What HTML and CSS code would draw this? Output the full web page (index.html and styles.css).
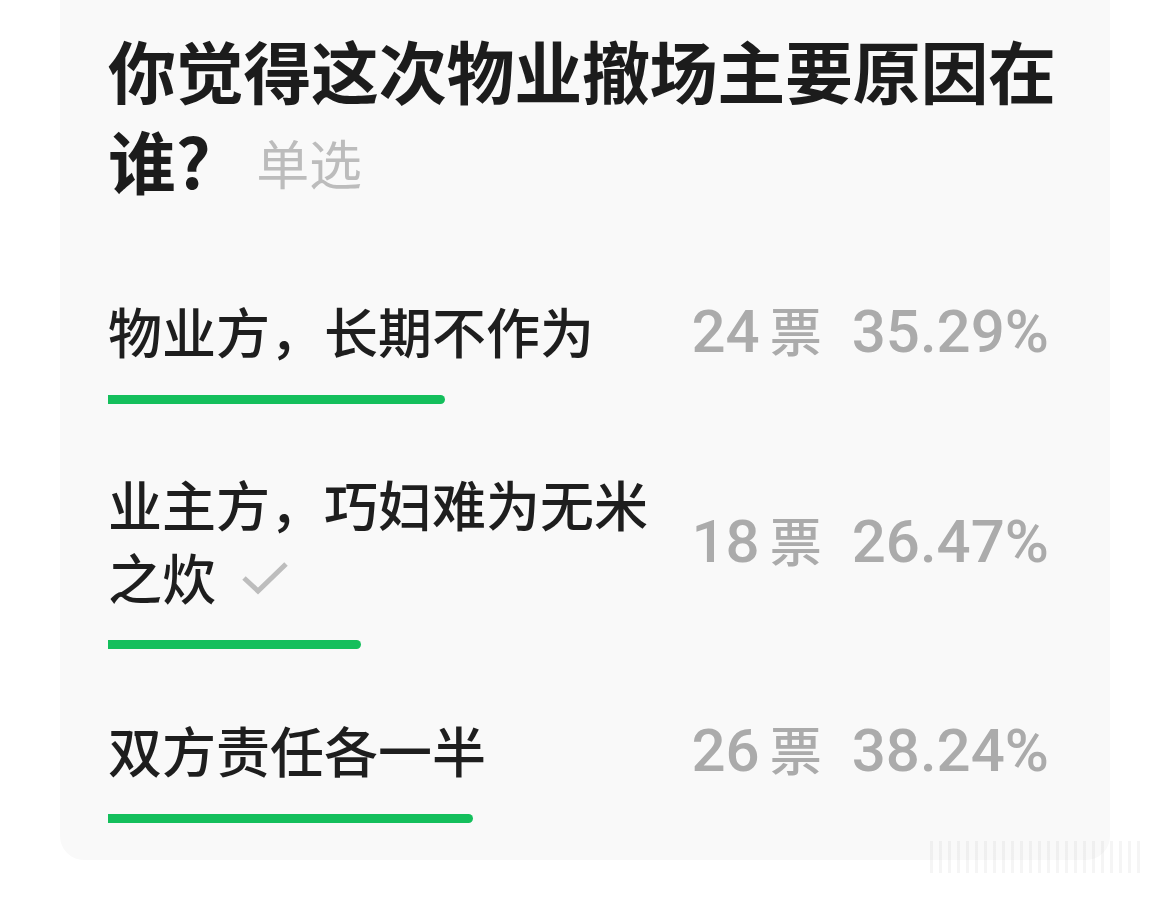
FILE: index.html
```html
<!DOCTYPE html>
<html lang="zh-CN">
<head>
  <meta charset="UTF-8">
  <meta name="viewport" content="width=device-width, initial-scale=1.0">
  <title>投票结果</title>
  <link rel="stylesheet" href="styles.css">
</head>
<body>
  <div class="vote-card">
    <h2 class="vote-title">你觉得这次物业撤场主要原因在谁?<span class="vote-type">单选</span></h2>

    <div class="option">
      <div class="option-row">
        <div class="option-text">物业方，长期不作为</div>
        <div class="option-stats"><span class="count">24<em>票</em></span><span>35.29%</span></div>
      </div>
      <div class="bar" style="width: 35.29%"></div>
    </div>

    <div class="option">
      <div class="option-row">
        <div class="option-text">业主方，巧妇难为无米之炊<svg class="check" viewBox="0 0 50 40" width="50" height="40"><path d="M4 20 L18 33 L46 6" fill="none" stroke="#bdbdbd" stroke-width="5"/></svg></div>
        <div class="option-stats"><span class="count">18<em>票</em></span><span>26.47%</span></div>
      </div>
      <div class="bar" style="width: 26.47%"></div>
    </div>

    <div class="option">
      <div class="option-row">
        <div class="option-text">双方责任各一半</div>
        <div class="option-stats"><span class="count">26<em>票</em></span><span>38.24%</span></div>
      </div>
      <div class="bar" style="width: 38.24%"></div>
    </div>
  </div>

  <div class="mark"></div>
</body>
</html>
```

FILE: styles.css
```css
* {
  margin: 0;
  padding: 0;
  box-sizing: border-box;
}

body {
  background: #ffffff;
  font-family: "Noto Sans CJK SC", "Noto Sans", sans-serif;
  width: 1170px;
  height: 898px;
  overflow: hidden;
  position: relative;
}

/* Card */
.vote-card {
  margin: -40px 0 0 60px;
  width: 1050px;
  background: #f9f9f9;
  border-radius: 0 0 24px 24px;
  padding: 65px 47px 37px 48px;
}

.vote-title {
  font-size: 68px;
  line-height: 90px;
  font-weight: 700;
  color: #1c1c1c;
  letter-spacing: -0.3px;
  margin-bottom: 86px;
}

.vote-type {
  font-size: 53px;
  font-weight: 400;
  color: #bcbcbc;
  margin-left: 46px;
  vertical-align: 4px;
}

/* Options */
.option {
  margin-bottom: 63px;
}

.option:last-child {
  margin-bottom: 0;
}

.option-row {
  display: flex;
  align-items: center;
  justify-content: space-between;
  margin-bottom: 27px;
}

.option-text {
  width: 560px;
  font-size: 54px;
  line-height: 73px;
  font-weight: 500;
  color: #1e1e1e;
}

.check {
  vertical-align: 2px;
  margin-left: 24px;
}

.option-stats {
  display: flex;
  align-items: baseline;
  gap: 30px;
  padding-right: 14px;
  font-family: "Roboto", sans-serif;
  font-size: 60px;
  line-height: 73px;
  font-weight: 500;
  color: #ababab;
}

.count em {
  font-style: normal;
  font-family: "Noto Sans CJK SC", sans-serif;
  font-size: 52px;
  margin-left: 10px;
}

.bar {
  height: 9px;
  background: #14bf5c;
  border-radius: 0 5px 5px 0;
}

/* faint mark in the corner */
.mark {
  position: absolute;
  left: 930px;
  top: 841px;
  width: 215px;
  height: 32px;
  background: repeating-linear-gradient(90deg, rgba(0,0,0,0.04) 0 3px, transparent 3px 9px);
}
```
